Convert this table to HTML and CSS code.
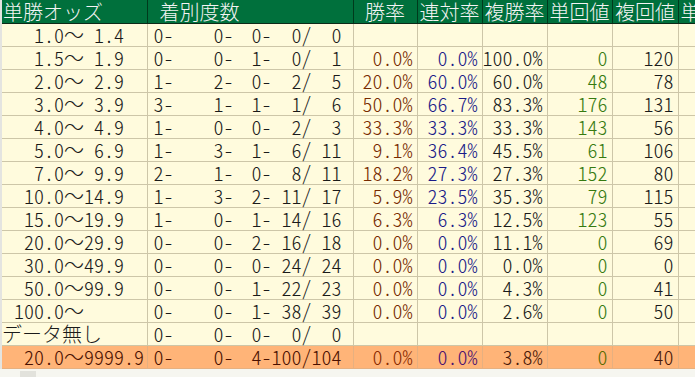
FILE: index.html
```html
<!DOCTYPE html>
<html lang="ja">
<head>
<meta charset="utf-8">
<link rel="stylesheet" href="styles.css">
</head>
<body>
<div class="page">
<table class="odds">
<colgroup>
<col class="c-label"><col class="c-count"><col class="c-rate"><col class="c-rate2"><col class="c-rate2"><col class="c-rate2"><col class="c-rate3"><col class="c-rate2">
</colgroup>
<thead>
<tr><th class="h-left">単勝オッズ</th><th class="h-count">着別度数</th><th>勝率</th><th>連対率</th><th>複勝率</th><th>単回値</th><th>複回値</th><th class="h-cut">単</th></tr>
</thead>
<tbody>
<tr><td class="lbl">   1.0<span class="w">～</span> 1.4</td><td><div class="cnt"><span>0-</span><span>0-</span><span>0-</span><span>0/</span><span>0</span></div></td><td></td><td></td><td></td><td></td><td></td><td></td></tr>
<tr><td class="lbl">   1.5<span class="w">～</span> 1.9</td><td><div class="cnt"><span>0-</span><span>0-</span><span>1-</span><span>0/</span><span>1</span></div></td><td class="num win">0.0%</td><td class="num ren">0.0%</td><td class="num">100.0%</td><td class="num tan">0</td><td class="num">120</td><td></td></tr>
<tr><td class="lbl">   2.0<span class="w">～</span> 2.9</td><td><div class="cnt"><span>1-</span><span>2-</span><span>0-</span><span>2/</span><span>5</span></div></td><td class="num win">20.0%</td><td class="num ren">60.0%</td><td class="num">60.0%</td><td class="num tan">48</td><td class="num">78</td><td></td></tr>
<tr><td class="lbl">   3.0<span class="w">～</span> 3.9</td><td><div class="cnt"><span>3-</span><span>1-</span><span>1-</span><span>1/</span><span>6</span></div></td><td class="num win">50.0%</td><td class="num ren">66.7%</td><td class="num">83.3%</td><td class="num tan">176</td><td class="num">131</td><td></td></tr>
<tr><td class="lbl">   4.0<span class="w">～</span> 4.9</td><td><div class="cnt"><span>1-</span><span>0-</span><span>0-</span><span>2/</span><span>3</span></div></td><td class="num win">33.3%</td><td class="num ren">33.3%</td><td class="num">33.3%</td><td class="num tan">143</td><td class="num">56</td><td></td></tr>
<tr><td class="lbl">   5.0<span class="w">～</span> 6.9</td><td><div class="cnt"><span>1-</span><span>3-</span><span>1-</span><span>6/</span><span>11</span></div></td><td class="num win">9.1%</td><td class="num ren">36.4%</td><td class="num">45.5%</td><td class="num tan">61</td><td class="num">106</td><td></td></tr>
<tr><td class="lbl">   7.0<span class="w">～</span> 9.9</td><td><div class="cnt"><span>2-</span><span>1-</span><span>0-</span><span>8/</span><span>11</span></div></td><td class="num win">18.2%</td><td class="num ren">27.3%</td><td class="num">27.3%</td><td class="num tan">152</td><td class="num">80</td><td></td></tr>
<tr><td class="lbl">  10.0<span class="w">～</span>14.9</td><td><div class="cnt"><span>1-</span><span>3-</span><span>2-</span><span>11/</span><span>17</span></div></td><td class="num win">5.9%</td><td class="num ren">23.5%</td><td class="num">35.3%</td><td class="num tan">79</td><td class="num">115</td><td></td></tr>
<tr><td class="lbl">  15.0<span class="w">～</span>19.9</td><td><div class="cnt"><span>1-</span><span>0-</span><span>1-</span><span>14/</span><span>16</span></div></td><td class="num win">6.3%</td><td class="num ren">6.3%</td><td class="num">12.5%</td><td class="num tan">123</td><td class="num">55</td><td></td></tr>
<tr><td class="lbl">  20.0<span class="w">～</span>29.9</td><td><div class="cnt"><span>0-</span><span>0-</span><span>2-</span><span>16/</span><span>18</span></div></td><td class="num win">0.0%</td><td class="num ren">0.0%</td><td class="num">11.1%</td><td class="num tan">0</td><td class="num">69</td><td></td></tr>
<tr><td class="lbl">  30.0<span class="w">～</span>49.9</td><td><div class="cnt"><span>0-</span><span>0-</span><span>0-</span><span>24/</span><span>24</span></div></td><td class="num win">0.0%</td><td class="num ren">0.0%</td><td class="num">0.0%</td><td class="num tan">0</td><td class="num">0</td><td></td></tr>
<tr><td class="lbl">  50.0<span class="w">～</span>99.9</td><td><div class="cnt"><span>0-</span><span>0-</span><span>1-</span><span>22/</span><span>23</span></div></td><td class="num win">0.0%</td><td class="num ren">0.0%</td><td class="num">4.3%</td><td class="num tan">0</td><td class="num">41</td><td></td></tr>
<tr><td class="lbl"> 100.0<span class="w">～</span></td><td><div class="cnt"><span>0-</span><span>0-</span><span>1-</span><span>38/</span><span>39</span></div></td><td class="num win">0.0%</td><td class="num ren">0.0%</td><td class="num">2.6%</td><td class="num tan">0</td><td class="num">50</td><td></td></tr>
<tr><td class="lbl lbl-jp">データ無し</td><td><div class="cnt"><span>0-</span><span>0-</span><span>0-</span><span>0/</span><span>0</span></div></td><td></td><td></td><td></td><td></td><td></td><td></td></tr>
<tr class="total"><td class="lbl">  20.0<span class="w">～</span>9999.9</td><td><div class="cnt"><span>0-</span><span>0-</span><span>4-</span><span>100/</span><span>104</span></div></td><td class="num win">0.0%</td><td class="num ren">0.0%</td><td class="num">3.8%</td><td class="num tan">0</td><td class="num">40</td><td></td></tr>
</tbody>
</table>
<div class="foot"><span class="foot-box"></span></div>
</div>
</body>
</html>
```
FILE: styles.css
```css
html, body {
  margin: 0;
  padding: 0;
  background: #f6f6f0;
  overflow: hidden;
}
.page {
  width: 695px;
  height: 377px;
  overflow: hidden;
  padding-left: 2px;
  box-sizing: border-box;
  background: #e4e4e0;
  position: relative;
}
.odds {
  border-collapse: collapse;
  table-layout: fixed;
  width: 741px;
  font-family: "Noto Sans CJK JP", sans-serif;
  font-feature-settings: "hwid" 1;
  font-size: 20px;
  font-weight: 300;
  color: #1a1a1a;
  background: #fffbdd;
}
.c-label { width: 145px; }
.c-count { width: 206px; }
.c-rate { width: 64px; }
.c-rate2 { width: 65px; }
.c-rate3 { width: 66px; }
.odds th {
  height: 23px;
  padding: 0;
  background: #00703c;
  color: #f4f4f4;
  font-weight: 300;
  line-height: 23px;
  text-align: center;
  white-space: nowrap;
  border-left: 1px solid #003a1c;
  border-bottom: 1px solid #0c2a18;
}
.odds th.h-left { text-align: left; padding-left: 1px; border-left: none; }
.odds th.h-count { text-align: left; padding-left: 12px; }
.odds th.h-cut { text-align: left; padding-left: 2px; }
.odds td {
  height: 22px;
  padding: 0;
  line-height: 22px;
  white-space: pre;
  border: 1px solid #cdc6a8;
  border-top: none;
}
.odds td:first-child { border-left: none; }
.lbl { padding-left: 2px !important; }
.lbl-jp { padding-left: 0 !important; }
.w { font-feature-settings: normal; }
.num { text-align: right; padding-right: 4px !important; }
.win { color: #772a00; }
.ren { color: #1a1a88; }
.tan { color: #367a10; }
.cnt {
  display: grid;
  grid-template-columns: 26px 60px 38px 40px 30px;
}
.cnt span { text-align: right; }
.total td { background: #ffb478; color: #4a1000; border-color: #e6b080; }
.total .win { color: #8a2a00; }
.total .ren { color: #4a1070; }
.total .tan { color: #5a6a00; }
.total .num:not(.win):not(.ren):not(.tan) { color: #4a1808; }
.foot {
  height: 10px;
  background: #f6f6f0;
  margin-left: -2px;
  position: relative;
}
.foot-box {
  position: absolute;
  left: 20px;
  top: 2px;
  width: 16px;
  height: 8px;
  background: #e2e2dc;
}
```
